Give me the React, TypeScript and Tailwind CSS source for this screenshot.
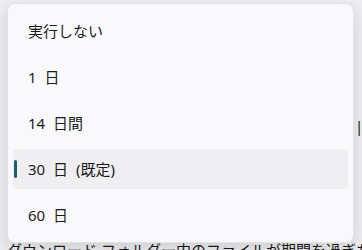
import React from "react";

const items = [
  { label: "実行しない", selected: false },
  { label: "1 日", selected: false },
  { label: "14 日間", selected: false },
  { label: "30 日 (既定)", selected: true },
  { label: "60 日", selected: false },
];

export default function App() {
  return (
    <div
      className="relative w-[362px] h-[250px] overflow-hidden bg-[#ededf0] text-[#1b1b1b]"
      style={{ fontFamily: '"Noto Sans", "Noto Sans CJK JP", sans-serif' }}
    >
      {/* background content peeking out */}
      <div className="absolute left-[355px] top-[116px] text-[15px] leading-[20px] whitespace-nowrap">
        |間
      </div>
      <div className="absolute left-[7px] top-[240px] text-[15px] leading-[20px] whitespace-nowrap">
        ダウンロード フォルダー内のファイルが期間を過ぎたら [ダウンロード] フォルダー
      </div>

      {/* menu */}
      <div className="absolute left-[7px] top-[3px] w-[347px] h-[240px] rounded-[8px] bg-[#f9f9fb] border border-[#e3e3e6] shadow-[0_6px_16px_rgba(0,0,0,0.12)] pt-[7px] flex flex-col gap-[6px]">
        {items.map((it) => (
          <div
            key={it.label}
            className={
              "relative mx-[5px] h-[40px] rounded-[4px] flex items-center pl-[15px] text-[15px] [word-spacing:4px] " +
              (it.selected ? "bg-[#efeff1]" : "")
            }
          >
            {it.selected && (
              <span className="absolute left-[1px] top-[11px] w-[3px] h-[18px] rounded-full bg-[#1d5f6d]" />
            )}
            {it.label}
          </div>
        ))}
      </div>
    </div>
  );
}
